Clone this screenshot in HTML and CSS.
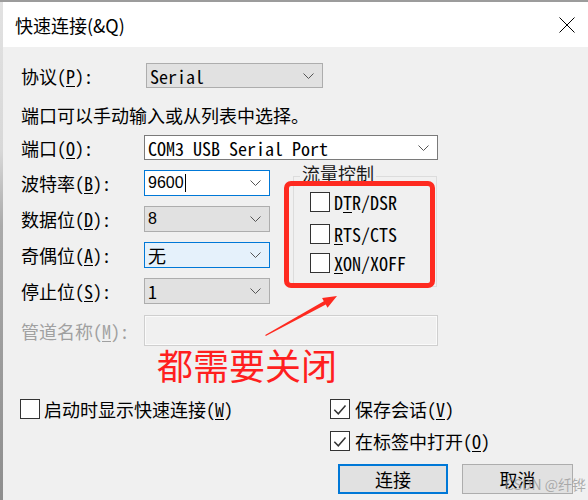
FILE: index.html
```html
<!DOCTYPE html>
<html lang="zh-CN">
<head>
<meta charset="utf-8">
<title>快速连接</title>
<link rel="stylesheet" href="styles.css">
</head>
<body>
<div class="window">
  <div class="titlebar">
    <span class="title">快速连接(&amp;Q)</span>
    <svg class="close" width="16" height="16" viewBox="0 0 16 16"><path d="M0.5 0.5 L15.5 15.5 M15.5 0.5 L0.5 15.5" stroke="#000" stroke-width="1" fill="none"/></svg>
  </div>
  <div class="content">
    <div class="row">
      <span class="lbl">协议(<u>P</u>):</span>
      <div class="combo w-proto"><span class="val">Serial</span><svg class="chev" viewBox="0 0 11 6"><path d="M0.5 0.5 L5.5 5.5 L10.5 0.5" stroke="#555" fill="none"/></svg></div>
    </div>
    <div class="hint">端口可以手动输入或从列表中选择。</div>
    <div class="row r-port">
      <span class="lbl">端口(<u>O</u>):</span>
      <div class="combo white w-port"><span class="val">COM3 USB Serial Port</span><svg class="chev" viewBox="0 0 11 6"><path d="M0.5 0.5 L5.5 5.5 L10.5 0.5" stroke="#555" fill="none"/></svg></div>
    </div>
    <div class="mid">
      <div class="fields">
        <div class="row">
          <span class="lbl">波特率(<u>B</u>):</span>
          <div class="combo focus w-mid"><span class="val sans">9600<span class="caret"></span></span><svg class="chev" viewBox="0 0 11 6"><path d="M0.5 0.5 L5.5 5.5 L10.5 0.5" stroke="#555" fill="none"/></svg></div>
        </div>
        <div class="row">
          <span class="lbl">数据位(<u>D</u>):</span>
          <div class="combo w-mid"><span class="val sans">8</span><svg class="chev" viewBox="0 0 11 6"><path d="M0.5 0.5 L5.5 5.5 L10.5 0.5" stroke="#555" fill="none"/></svg></div>
        </div>
        <div class="row">
          <span class="lbl">奇偶位(<u>A</u>):</span>
          <div class="combo hover w-mid"><span class="val">无</span><svg class="chev" viewBox="0 0 11 6"><path d="M0.5 0.5 L5.5 5.5 L10.5 0.5" stroke="#555" fill="none"/></svg></div>
        </div>
        <div class="row">
          <span class="lbl">停止位(<u>S</u>):</span>
          <div class="combo w-mid"><span class="val">1</span><svg class="chev" viewBox="0 0 11 6"><path d="M0.5 0.5 L5.5 5.5 L10.5 0.5" stroke="#555" fill="none"/></svg></div>
        </div>
      </div>
      <fieldset class="flow">
        <legend>流量控制</legend>
        <div class="check c1"><span class="box"></span><span>D<u>T</u>R/DSR</span></div>
        <div class="check c2"><span class="box"></span><span><u>R</u>TS/CTS</span></div>
        <div class="check c3"><span class="box"></span><span><u>X</u>ON/XOFF</span></div>
      </fieldset>
    </div>
    <div class="row r-pipe">
      <span class="lbl disabled">管道名称(<u>M</u>):</span>
      <div class="pipe"></div>
    </div>
    <div class="bottom">
      <div class="bottom-left">
        <div class="check"><span class="box"></span><span>启动时显示快速连接(<u>W</u>)</span></div>
      </div>
      <div class="bottom-right">
        <div class="check"><span class="box"><svg width="18" height="18" viewBox="0 0 18 18"><path d="M3.3 9.8 L7.3 13.8 L14.5 5.6" stroke="#333" stroke-width="1.5" fill="none"/></svg></span><span>保存会话(<u>V</u>)</span></div>
        <div class="check c-open"><span class="box"><svg width="18" height="18" viewBox="0 0 18 18"><path d="M3.3 9.8 L7.3 13.8 L14.5 5.6" stroke="#333" stroke-width="1.5" fill="none"/></svg></span><span>在标签中打开(<u>O</u>)</span></div>
        <div class="buttons">
          <button class="btn default">连接</button>
          <button class="btn cancel">取消</button>
        </div>
      </div>
    </div>
  </div>

  <div class="annot-box"></div>
  <svg class="annot-arrow" width="588" height="500" viewBox="0 0 588 500"><polygon points="265.2,335.0 323.8,301.2 322.1,298.1 337,296 327.5,307.7 325.8,304.6 265.8,336.0" fill="#fe2a20"/></svg>
  <div class="annot-text">都需要关闭</div>
  <div class="watermark">CSDN @纤铧</div>
</div>
</body>
</html>
```

FILE: styles.css
```css
* { box-sizing: border-box; }
html, body { margin: 0; padding: 0; }
body {
  width: 588px;
  height: 500px;
  overflow: hidden;
  background:
    linear-gradient(#9c9c9c, #9c9c9c) top left / 100% 2px no-repeat,
    linear-gradient(to bottom, #e2e2e2 0%, #d8d8d8 30%, #aaaaaa 45%, #8e8e8e 100%);
  font-family: "Noto Sans Mono CJK SC", "Noto Sans CJK SC", monospace;
  font-size: 18px;
  color: #000;
}
.window {
  position: relative;
  margin: 2px 0 0 3px;
  width: 585px;
  height: 498px;
  background: #f0f0f0;
  display: flex;
  flex-direction: column;
}
.titlebar {
  height: 45px;
  flex: none;
  background: #fff;
  display: flex;
  align-items: center;
  justify-content: space-between;
  padding: 0 13px 0 12px;
}
.title {
  font-family: "Noto Sans CJK SC", sans-serif;
  font-size: 18px;
  line-height: 20px;
}
.close { display: block; }
.content { padding: 16px 0 0 17px; }
.row { display: flex; align-items: center; }
.lbl {
  width: 124px;
  flex: none;
  padding-left: 1px;
  line-height: 20px;
  white-space: nowrap;
}
.lbl.disabled { color: #a0a0a0; }
u { text-decoration-thickness: 1px; text-underline-offset: 2px; }
.combo {
  height: 25px;
  display: flex;
  align-items: center;
  justify-content: space-between;
  padding: 0 8px 0 3px;
  border: 1px solid #adadad;
  background: #e1e1e1;
}
.combo.white { background: #fff; border-color: #7a7a7a; }
.combo.focus { background: #fff; border-color: #0078d7; }
.combo.hover { background: #e5f1fb; border-color: #0078d7; }
.w-proto { width: 177px; margin-left: 2px; }
.w-port { width: 294px; }
.w-mid { width: 126px; height: 26px; }
.chev { width: 11px; height: 6px; flex: none; display: block; }
.val { line-height: 20px; white-space: nowrap; display: flex; align-items: center; }
.sans { font-family: "Liberation Sans", "Noto Sans CJK SC", sans-serif; font-size: 16px; }
.caret { display: inline-block; width: 1px; height: 18px; background: #000; margin-left: 1px; }
.hint { margin-top: 17px; line-height: 20px; padding-left: 1px; }
.r-port { margin-top: 10px; }
.mid { display: flex; align-items: flex-start; margin-top: 10px; }
.fields { display: flex; flex-direction: column; gap: 10px; width: 250px; flex: none; }
.flow {
  margin: -7px 0 0 23px;
  width: 144px;
  min-width: 0;
  border: 1px solid #dcdcdc;
  padding: 0 0 13px 16px;
}
.flow legend {
  padding: 0 2px 6px;
  margin-left: -10px;
  line-height: 20px;
  color: #1a1a1a;
}
.check { display: flex; align-items: center; gap: 4px; height: 20px; line-height: 20px; white-space: nowrap; }
.box {
  width: 20px;
  height: 20px;
  flex: none;
  border: 1px solid #333;
  background: #fff;
  display: flex;
  align-items: center;
  justify-content: center;
}
.box svg { display: block; }
.c1 { margin-top: 3px; }
.c2 { margin-top: 12px; }
.c3 { margin-top: 9px; }
.r-pipe { margin-top: 11px; }
.pipe {
  width: 294px;
  height: 31px;
  border: 1px solid #cfcfcf;
  box-shadow: inset 0 0 0 1px #fafafa;
  background: #f0f0f0;
}
.bottom { display: flex; margin-top: 53px; }
.bottom-left { width: 310px; flex: none; }
.bottom-right { display: flex; flex-direction: column; }
.bottom-right .check { gap: 5px; }
.c-open { margin-top: 12px; }
.buttons { display: flex; gap: 14px; margin: 13px 0 0 8px; }
.btn {
  width: 110px;
  height: 30px;
  padding: 0;
  background: #e1e1e1;
  border: 1px solid #adadad;
  font: inherit;
  color: #000;
  line-height: 20px;
}
.btn.default { border: 2px solid #0078d7; }
.btn.cancel { width: 111px; }
.annot-box {
  position: absolute;
  left: 281px;
  top: 179px;
  width: 151px;
  height: 107px;
  border: 5px solid #fe2a20;
  border-radius: 7px;
}
.annot-arrow { position: absolute; left: -3px; top: -2px; pointer-events: none; }
.annot-text {
  position: absolute;
  left: 154px;
  top: 344px;
  font-family: "Noto Sans CJK SC", sans-serif;
  font-size: 36px;
  line-height: 36px;
  color: #ff1f1f;
  white-space: nowrap;
}
.watermark {
  position: absolute;
  left: 502px;
  top: 473px;
  font-family: "Noto Sans CJK SC", sans-serif;
  font-size: 14px;
  line-height: 18px;
  color: rgba(150, 150, 150, 0.75);
  white-space: nowrap;
}
```
